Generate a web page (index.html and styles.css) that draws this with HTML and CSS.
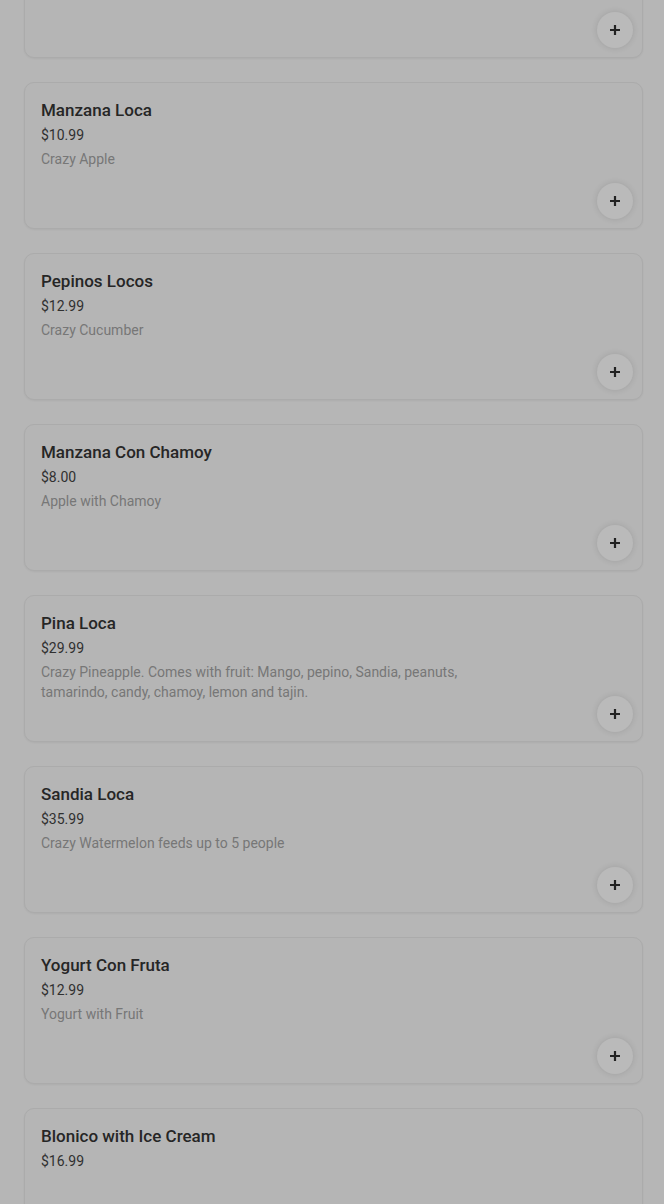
FILE: index.html
```html
<!DOCTYPE html>
<html lang="en">
<head>
  <meta charset="UTF-8">
  <meta name="viewport" content="width=device-width, initial-scale=1.0">
  <title>Menu</title>
  <link rel="stylesheet" href="styles.css">
</head>
<body>

<div class="lista-menu">
  <div class="tarjeta">
    <h3>Mango Loco</h3>
    <p class="precio">$10.99</p>
    <p class="desc">Crazy Mango</p>
    <button class="agregar"><svg viewBox="0 0 12 12"><path d="M6 1v10M1 6h10"/></svg></button>
  </div>

  <div class="tarjeta">
    <h3>Manzana Loca</h3>
    <p class="precio">$10.99</p>
    <p class="desc">Crazy Apple</p>
    <button class="agregar"><svg viewBox="0 0 12 12"><path d="M6 1v10M1 6h10"/></svg></button>
  </div>

  <div class="tarjeta">
    <h3>Pepinos Locos</h3>
    <p class="precio">$12.99</p>
    <p class="desc">Crazy Cucumber</p>
    <button class="agregar"><svg viewBox="0 0 12 12"><path d="M6 1v10M1 6h10"/></svg></button>
  </div>

  <div class="tarjeta">
    <h3>Manzana Con Chamoy</h3>
    <p class="precio">$8.00</p>
    <p class="desc">Apple with Chamoy</p>
    <button class="agregar"><svg viewBox="0 0 12 12"><path d="M6 1v10M1 6h10"/></svg></button>
  </div>

  <div class="tarjeta">
    <h3>Pina Loca</h3>
    <p class="precio">$29.99</p>
    <p class="desc">Crazy Pineapple. Comes with fruit: Mango, pepino, Sandia, peanuts, tamarindo, candy, chamoy, lemon and tajin.</p>
    <button class="agregar"><svg viewBox="0 0 12 12"><path d="M6 1v10M1 6h10"/></svg></button>
  </div>

  <div class="tarjeta">
    <h3>Sandia Loca</h3>
    <p class="precio">$35.99</p>
    <p class="desc">Crazy Watermelon feeds up to 5 people</p>
    <button class="agregar"><svg viewBox="0 0 12 12"><path d="M6 1v10M1 6h10"/></svg></button>
  </div>

  <div class="tarjeta">
    <h3>Yogurt Con Fruta</h3>
    <p class="precio">$12.99</p>
    <p class="desc">Yogurt with Fruit</p>
    <button class="agregar"><svg viewBox="0 0 12 12"><path d="M6 1v10M1 6h10"/></svg></button>
  </div>

  <div class="tarjeta">
    <h3>Blonico with Ice Cream</h3>
    <p class="precio">$16.99</p>
    <p class="desc"></p>
    <button class="agregar"><svg viewBox="0 0 12 12"><path d="M6 1v10M1 6h10"/></svg></button>
  </div>
</div>

</body>
</html>
```

FILE: styles.css
```css
body {
  margin: 0;
  background: #b6b6b6;
  font-family: Roboto, "Noto Sans", sans-serif;
  overflow: hidden;
}
.lista-menu {
  margin-top: -89px;
  padding: 0 21px 0 24px;
  display: flex;
  flex-direction: column;
  gap: 24px;
}
.tarjeta {
  position: relative;
  height: 147px;
  box-sizing: border-box;
  padding: 16px;
  border: 1px solid #ababab;
  border-radius: 10px;
  background: #b5b5b5;
  box-shadow: 0 1px 2px rgba(0,0,0,0.05);
}
.tarjeta h3 {
  margin: 1px 0 0;
  font-size: 17px;
  line-height: 20px;
  font-weight: 500;
  color: #262626;
}
.precio {
  margin: 5px 0 0;
  font-size: 14px;
  line-height: 20px;
  color: #303030;
}
.desc {
  margin: 4px 0 0;
  max-width: 445px;
  font-size: 14px;
  line-height: 20px;
  color: #777;
}
.agregar {
  position: absolute;
  right: 9px;
  bottom: 9px;
  width: 36px;
  height: 36px;
  border: none;
  border-radius: 50%;
  background: #bababa;
  box-shadow: 0 0 6px rgba(0,0,0,0.12);
  padding: 0;
  display: flex;
  align-items: center;
  justify-content: center;
  cursor: pointer;
}
.agregar svg {
  width: 12px;
  height: 12px;
  stroke: #222;
  stroke-width: 2.2;
  fill: none;
}
```
